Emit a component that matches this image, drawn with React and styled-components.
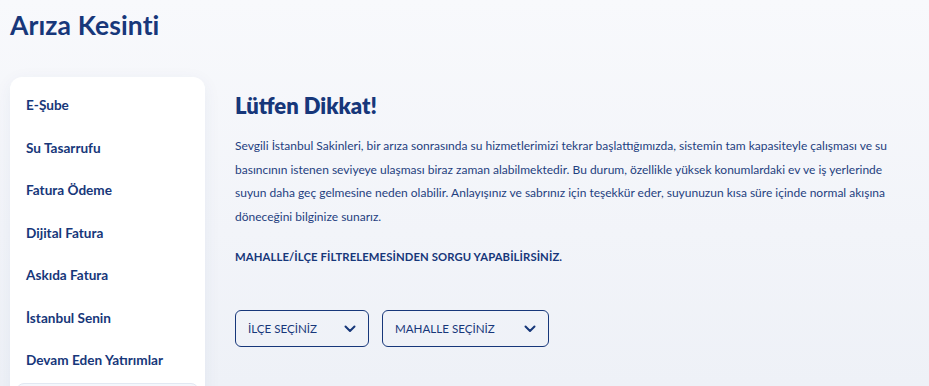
import React from "react";
import styled, { createGlobalStyle } from "styled-components";

const Global = createGlobalStyle`
  html, body { margin: 0; padding: 0; }
  body {
    background: linear-gradient(180deg, #f8f9fc 0%, #f2f4f9 60%, #eef1f7 100%);
    font-family: Lato, "Noto Sans", sans-serif;
    color: #17377a;
    width: 929px;
    height: 386px;
    overflow: hidden;
  }
`;

const Page = styled.div`
  padding: 9px 0 0 10px;
`;

const Title = styled.h1`
  margin: 0;
  font-size: 26.5px;
  font-weight: 700;
  color: #17377a;
  line-height: 32px;
  letter-spacing: 0.1px;
`;

const Layout = styled.div`
  display: flex;
  align-items: flex-start;
  margin-top: 36px;
  gap: 30px;
`;

const Sidebar = styled.nav`
  width: 195px;
  background: #fff;
  border-radius: 12px;
  box-shadow: 0 4px 18px rgba(30, 60, 120, 0.06);
  padding: 7px 0 10px;
  display: flex;
  flex-direction: column;
`;

const NavItem = styled.a`
  display: flex;
  align-items: center;
  height: 42.5px;
  padding-left: 16px;
  font-size: 13.6px;
  font-weight: 700;
  color: #17377a;
  text-decoration: none;
  box-sizing: border-box;
`;

const ActiveSlot = styled.div`
  height: 48px;
  margin: 1px 6px 0;
  border-radius: 8px;
  background: #f4f7fc;
  border: 1px solid #e2e8f2;
`;

const Main = styled.section`
  flex: 1;
  padding-top: 15px;
  padding-right: 20px;
`;

const Heading = styled.h2`
  margin: 0;
  font-size: 22px;
  font-weight: 800;
  color: #17377a;
  line-height: 28px;
`;

const Paragraph = styled.p`
  margin: 14px 0 0;
  font-size: 12px;
  line-height: 23.5px;
  color: #1f3f80;
  max-width: 672px;
`;

const Notice = styled.p`
  margin: 22px 0 0;
  font-size: 11.3px;
  font-weight: 700;
  color: #17377a;
  letter-spacing: 0.1px;
`;

const Filters = styled.div`
  display: flex;
  gap: 13px;
  margin-top: 47px;
`;

const Select = styled.button`
  display: flex;
  align-items: center;
  justify-content: space-between;
  width: ${(p) => p.$w}px;
  height: 37px;
  padding: 0 12px 0 12px;
  box-sizing: border-box;
  background: transparent;
  border: 1px solid #17377a;
  border-radius: 6px;
  font-family: inherit;
  font-size: 11.6px;
  color: #17377a;
  cursor: pointer;
`;

const Chevron = () => (
  <svg width="12" height="8" viewBox="0 0 12 8" fill="none">
    <path d="M1.5 1.5L6 6L10.5 1.5" stroke="#17377a" strokeWidth="2" strokeLinecap="round" strokeLinejoin="round" />
  </svg>
);

const items = [
  "E-Şube",
  "Su Tasarrufu",
  "Fatura Ödeme",
  "Dijital Fatura",
  "Askıda Fatura",
  "İstanbul Senin",
  "Devam Eden Yatırımlar",
];

export default function App() {
  return (
    <>
      <Global />
      <Page>
        <Title>Arıza Kesinti</Title>
        <Layout>
          <Sidebar>
            {items.map((t) => (
              <NavItem key={t} href="#">{t}</NavItem>
            ))}
            <ActiveSlot />
          </Sidebar>
          <Main>
            <Heading>Lütfen Dikkat!</Heading>
            <Paragraph>
              Sevgili İstanbul Sakinleri, bir arıza sonrasında su hizmetlerimizi tekrar başlattığımızda, sistemin tam kapasiteyle çalışması ve su basıncının istenen seviyeye ulaşması biraz zaman alabilmektedir. Bu durum, özellikle yüksek konumlardaki ev ve iş yerlerinde suyun daha geç gelmesine neden olabilir. Anlayışınız ve sabrınız için teşekkür eder, suyunuzun kısa süre içinde normal akışına döneceğini bilginize sunarız.
            </Paragraph>
            <Notice>MAHALLE/İLÇE FİLTRELEMESİNDEN SORGU YAPABİLİRSİNİZ.</Notice>
            <Filters>
              <Select $w={134}>İLÇE SEÇİNİZ<Chevron /></Select>
              <Select $w={167}>MAHALLE SEÇİNİZ<Chevron /></Select>
            </Filters>
          </Main>
        </Layout>
      </Page>
    </>
  );
}
